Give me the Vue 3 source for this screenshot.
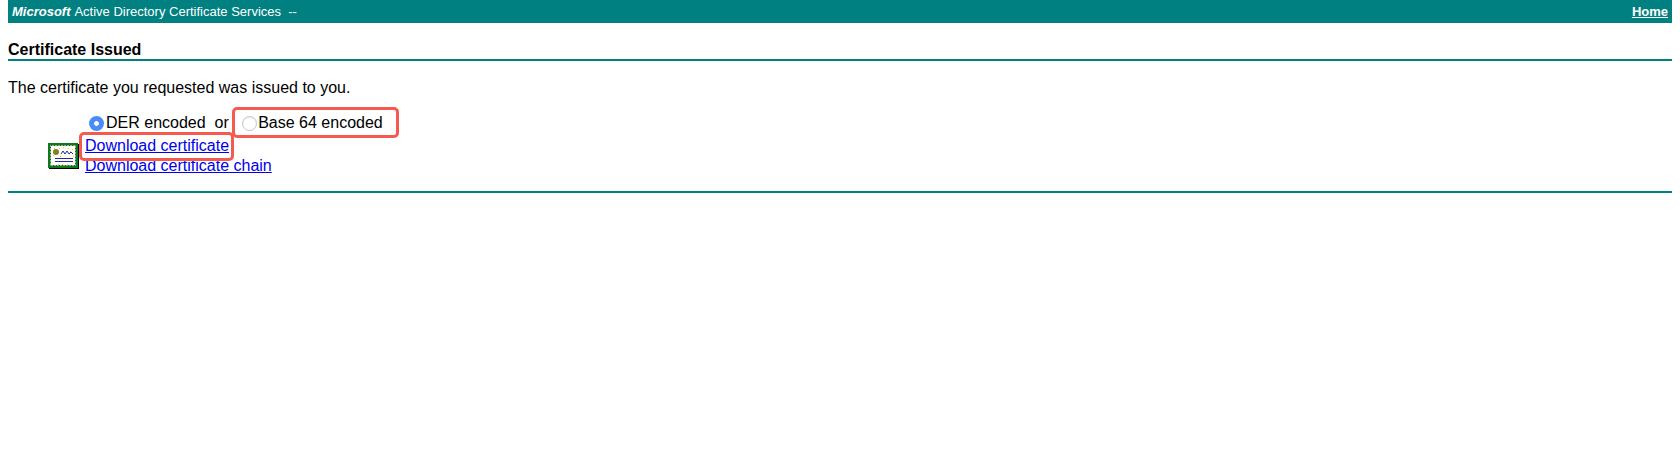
<script setup>
const dots = [[6,5],[11,5],[15,4],[20,5],[24,6],[5,12],[25,13],[10,21],[14,21],[19,21],[12,13],[22,8]]
</script>

<template>
  <div class="page">
    <header class="banner">
      <span class="brand"><b class="ms"><i>Microsoft</i></b> Active Directory Certificate Services &nbsp;--</span>
      <a class="home" href="#">Home</a>
    </header>
    <h1 class="title">Certificate Issued</h1>
    <p class="message">The certificate you requested was issued to you.</p>
    <div class="download">
      <svg class="cert" width="31" height="26" viewBox="0 0 31 26">
        <rect x="0" y="0" width="30" height="25" fill="#0a7a1c" />
        <rect x="1" y="25" width="30" height="1" fill="#000" />
        <rect x="30" y="1" width="1" height="25" fill="#000" />
        <rect x="2" y="2" width="26" height="21" fill="#fff" />
        <rect x="2.5" y="2.5" width="25" height="20" fill="none" stroke="#2c5a2c" stroke-width="1" stroke-dasharray="2 1" />
        <rect x="4" y="4" width="22" height="17" fill="#fffff4" />
        <circle cx="8" cy="9" r="3" fill="#80802c" />
        <path d="M13 11l2-3 2 3 2-3 2 3 2-2 2 2" fill="none" stroke="#1b2bb8" stroke-width="1" />
        <path d="M7 15.5h18M7 18.5h18" stroke="#1b2bb8" stroke-width="1" />
        <rect v-for="d in dots" :key="d[0] + '-' + d[1]" :x="d[0]" :y="d[1]" width="1" height="1" fill="#e8d900" />
      </svg>
      <div class="links">
        <div class="encoding">
          <span class="radio on"></span><span>DER encoded &nbsp;or&nbsp;</span>
          <span class="boxed b64"><span class="radio off"></span><span>Base 64 encoded</span></span>
        </div>
        <div class="boxed-link"><a href="#">Download certificate</a></div>
        <div class="chain"><a href="#">Download certificate chain</a></div>
      </div>
    </div>
    <hr class="rule" />
  </div>
</template>

<style scoped>
.page {
  width: 1664px;
  margin: 0 8px;
  font-family: "Liberation Sans", Arial, sans-serif;
  font-size: 16px;
  color: #000;
}
.banner {
  height: 23px;
  background: #008080;
  color: #fff;
  display: flex;
  justify-content: space-between;
  align-items: center;
  padding: 0 4px;
  font-size: 13px;
}
.ms {
  margin-right: 1px;
}
.home {
  color: #fff;
  font-weight: bold;
  text-decoration: underline;
}
.title {
  margin: 18px 0 0;
  font-size: 16px;
  line-height: 17px;
  font-weight: bold;
  padding-bottom: 1px;
  border-bottom: 2px solid #008080;
}
.message {
  margin: 18px 0 0;
  line-height: 18px;
}
.download {
  display: flex;
  align-items: flex-end;
  margin-top: 14px;
  padding-left: 40px;
}
.cert {
  margin-bottom: 7px;
  margin-right: 6px;
}
.links {
  line-height: 20px;
}
.encoding {
  display: flex;
  align-items: center;
  height: 24px;
  padding-left: 4px;
}
.radio {
  width: 15px;
  height: 15px;
  border-radius: 50%;
  box-sizing: border-box;
  margin-right: 2px;
  flex: none;
}
.radio.on {
  background: radial-gradient(circle, #fff 0 2px, #4a8cf7 2.8px);
}
.radio.off {
  background: #fff;
  border: 1px solid #c4c4c4;
  box-shadow: inset 0 1px 1px rgba(0, 0, 0, 0.08);
  margin-right: 1px;
}
.boxed {
  display: inline-flex;
  align-items: center;
  position: relative;
}
.b64 {
  margin-left: 9px;
}
.b64::after {
  content: "";
  position: absolute;
  left: -10px;
  top: -6px;
  width: 167px;
  height: 31px;
  box-sizing: border-box;
  border: 3px solid #f55a4e;
  border-radius: 5px;
}
.boxed-link {
  position: relative;
  height: 21px;
  line-height: 22px;
}
.boxed-link::after {
  content: "";
  position: absolute;
  left: -6px;
  top: -3px;
  width: 155px;
  height: 29px;
  box-sizing: border-box;
  border: 3px solid #f55a4e;
  border-radius: 5px;
}
a {
  color: #0000ee;
  text-decoration: underline;
}
.rule {
  margin: 15px 0 0;
  border: 0;
  height: 2px;
  background: #008080;
}
</style>
